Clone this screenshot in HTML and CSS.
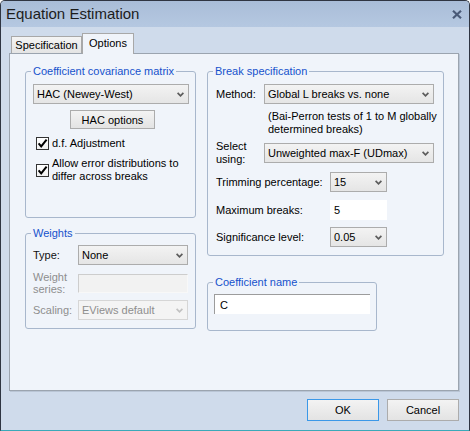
FILE: index.html
```html
<!DOCTYPE html>
<html>
<head>
<meta charset="utf-8">
<title>Equation Estimation</title>
<link rel="stylesheet" href="styles.css">
</head>
<body>
<div class="window">
  <div class="titlebar">
    <span class="title">Equation Estimation</span>
    <svg class="close" width="10" height="9" viewBox="0 0 10 9"><path d="M1 0.8 L9 8.2 M9 0.8 L1 8.2" stroke="#4a5a78" stroke-width="2.2" fill="none"/></svg>
  </div>
  <div class="tabs">
    <div class="tab spec">Specification</div>
    <div class="tab active">Options</div>
  </div>
  <div class="panel">
    <div class="col col-left">
      <div class="group g-cov">
        <span class="legend">Coefficient covariance matrix</span>
        <div class="combo w156"><span>HAC (Newey-West)</span><svg class="chev" width="7" height="5" viewBox="0 0 7 5"><polyline points="0.6,0.8 3.5,3.8 6.4,0.8" fill="none" stroke="#5c5c5c" stroke-width="1.7"/></svg></div>
        <div class="btn hac">HAC options</div>
        <div class="check c1">
          <span class="box"><svg width="11" height="11" viewBox="0 0 11 11"><polyline points="1.6,5.3 4.2,8.4 9.6,1.6" fill="none" stroke="#000" stroke-width="2"/></svg></span>
          <span class="ctext">d.f. Adjustment</span>
        </div>
        <div class="check c2">
          <span class="box"><svg width="11" height="11" viewBox="0 0 11 11"><polyline points="1.6,5.3 4.2,8.4 9.6,1.6" fill="none" stroke="#000" stroke-width="2"/></svg></span>
          <span class="ctext two">Allow error distributions to<br>differ across breaks</span>
        </div>
      </div>
      <div class="group g-w">
        <span class="legend">Weights</span>
        <div class="frow">
          <span class="flabel">Type:</span>
          <div class="combo w110"><span>None</span><svg class="chev" width="7" height="5" viewBox="0 0 7 5"><polyline points="0.6,0.8 3.5,3.8 6.4,0.8" fill="none" stroke="#5c5c5c" stroke-width="1.7"/></svg></div>
        </div>
        <div class="frow r-series">
          <span class="flabel dis two12">Weight<br>series:</span>
          <div class="field dis-field w110"></div>
        </div>
        <div class="frow r-scale">
          <span class="flabel dis">Scaling:</span>
          <div class="combo disabled w110"><span>EViews default</span><svg class="chev" width="7" height="5" viewBox="0 0 7 5"><polyline points="0.6,0.8 3.5,3.8 6.4,0.8" fill="none" stroke="#c2c2c2" stroke-width="1.7"/></svg></div>
        </div>
      </div>
    </div>
    <div class="col col-right">
      <div class="group g-brk">
        <span class="legend">Break specification</span>
        <div class="frow">
          <span class="blabel">Method:</span>
          <div class="combo w170"><span>Global L breaks vs. none</span><svg class="chev" width="7" height="5" viewBox="0 0 7 5"><polyline points="0.6,0.8 3.5,3.8 6.4,0.8" fill="none" stroke="#5c5c5c" stroke-width="1.7"/></svg></div>
        </div>
        <div class="note">(Bai-Perron tests of 1 to M globally<br>determined breaks)</div>
        <div class="frow r-select">
          <span class="blabel two">Select<br>using:</span>
          <div class="combo w170"><span>Unweighted max-F (UDmax)</span><svg class="chev" width="7" height="5" viewBox="0 0 7 5"><polyline points="0.6,0.8 3.5,3.8 6.4,0.8" fill="none" stroke="#5c5c5c" stroke-width="1.7"/></svg></div>
        </div>
        <div class="frow r-trim">
          <span class="wlabel">Trimming percentage:</span>
          <div class="combo w57"><span>15</span><svg class="chev" width="7" height="5" viewBox="0 0 7 5"><polyline points="0.6,0.8 3.5,3.8 6.4,0.8" fill="none" stroke="#5c5c5c" stroke-width="1.7"/></svg></div>
        </div>
        <div class="frow r-max">
          <span class="wlabel">Maximum breaks:</span>
          <div class="field plain w57">5</div>
        </div>
        <div class="frow r-sig">
          <span class="wlabel">Significance level:</span>
          <div class="combo w57"><span>0.05</span><svg class="chev" width="7" height="5" viewBox="0 0 7 5"><polyline points="0.6,0.8 3.5,3.8 6.4,0.8" fill="none" stroke="#5c5c5c" stroke-width="1.7"/></svg></div>
        </div>
      </div>
      <div class="group g-coef">
        <span class="legend">Coefficient name</span>
        <div class="field sunken w156">C</div>
      </div>
    </div>
  </div>
  <div class="footer">
    <div class="btn dlg ok">OK</div>
    <div class="btn dlg">Cancel</div>
  </div>
</div>
</body>
</html>
```
FILE: styles.css
```css
* { box-sizing: border-box; }
html, body { margin: 0; padding: 0; }
body {
  width: 470px;
  height: 431px;
  overflow: hidden;
  font-family: "Liberation Sans", Arial, sans-serif;
  font-size: 11px;
  color: #000;
  background: #ffffff;
}
.window {
  width: 470px;
  height: 431px;
  border: 1px solid #2f3542;
  border-bottom-color: #3aa9b9;
  border-radius: 5px 5px 0 0;
  background: #cfdbeb;
  display: flex;
  flex-direction: column;
  overflow: hidden;
}
.titlebar {
  flex: none;
  height: 26px;
  display: flex;
  align-items: center;
  justify-content: space-between;
  padding: 0 7px 0 5px;
  background: linear-gradient(#a9bdd8, #b5c8e1);
}
.title {
  font-size: 15px;
  line-height: 26px;
  color: #1c1c1c;
}
.close { display: block; }
.tabs {
  flex: none;
  height: 26px;
  display: flex;
  align-items: flex-end;
  padding-left: 10px;
}
.tab {
  height: 17px;
  border: 1px solid #a8a8a8;
  border-bottom: none;
  background: linear-gradient(#f4f4f4, #e4e4e4);
  text-align: center;
  line-height: 16px;
}
.tab.spec { width: 71px; }
.tab.active {
  width: 52px;
  height: 21px;
  line-height: 19px;
  margin-bottom: -1px;
  background: #f0f4fa;
  position: relative;
  z-index: 1;
}
.panel {
  flex: none;
  width: 450px;
  height: 338px;
  margin-left: 8px;
  border: 1px solid #9ba4af;
  background: #f0f4fa;
  box-shadow: 1px 1px 0 #b9c5d5;
  display: grid;
  grid-template-columns: 171px 237px;
  column-gap: 11px;
  align-items: start;
  padding: 17px 0 0 15px;
}
.col { display: flex; flex-direction: column; align-items: flex-start; }
.col-left { gap: 15px; }
.col-right { gap: 26px; }
.group {
  position: relative;
  border: 1px solid #a8b7cc;
  border-radius: 3px;
  display: flex;
  flex-direction: column;
  align-items: flex-start;
}
.legend {
  position: absolute;
  top: -8px;
  left: 5px;
  padding: 0 2px;
  line-height: 14px;
  color: #1652cc;
  background: #f0f4fa;
  white-space: nowrap;
}
.g-cov { width: 171px; height: 147px; padding: 12px 6px 0 7px; }
.g-w { width: 171px; height: 96px; padding: 11px 6px 0 7px; }
.g-brk { width: 237px; height: 185px; padding: 12px 9px 0 8px; }
.g-coef { width: 170px; height: 49px; padding: 11px 6px 0 6px; }

.combo {
  flex: none;
  height: 20px;
  border: 1px solid #acacac;
  background: linear-gradient(#f3f3f3, #e5e5e5);
  display: flex;
  align-items: center;
  justify-content: space-between;
  padding: 0 4px 0 3px;
  white-space: nowrap;
}
.combo.disabled {
  border-color: #d6d6d6;
  background: #f4f4f4;
  color: #8e8e8e;
}
.chev { display: block; flex: none; }
.w156 { width: 156px; }
.w170 { width: 170px; }
.w110 { width: 110px; }
.w57 { width: 57px; }

.btn {
  flex: none;
  border: 1px solid #acacac;
  background: linear-gradient(#f3f3f3, #e3e3e3);
  display: flex;
  align-items: center;
  justify-content: center;
}
.btn.hac {
  width: 85px;
  height: 19px;
  margin: 6px 0 0 37px;
}
.check {
  display: flex;
  align-items: center;
  margin-left: 3px;
}
.check.c1 { margin-top: 8px; height: 13px; }
.check.c2 { margin-top: 7px; }
.box {
  flex: none;
  width: 13px;
  height: 13px;
  border: 1px solid #333;
  background: linear-gradient(#ffffff, #f0f0f0);
  margin-right: 3px;
  display: flex;
}
.box svg { display: block; }
.ctext { line-height: 13px; white-space: nowrap; }

.frow {
  display: flex;
  align-items: center;
}
.flabel { width: 45px; flex: none; color: #111; }
.flabel.dis { color: #8e8e8e; }
.two12 { line-height: 12px; }
.r-series { margin-top: 6px; }
.r-scale { margin-top: 5px; }

.field {
  flex: none;
  height: 20px;
  display: flex;
  align-items: center;
}
.dis-field {
  height: 19px;
  border: 1px solid;
  border-color: #cdcdcd #f8f8f8 #f8f8f8 #cdcdcd;
  background: #f2f2f2;
}
.plain {
  background: #fff;
  padding-left: 4px;
}
.sunken {
  background: #fff;
  border-top: 1px solid #9c9c9c;
  border-left: 1px solid #9c9c9c;
  padding-left: 5px;
}

.blabel { width: 48px; flex: none; }
.blabel.two { line-height: 13px; }
.wlabel { width: 114px; flex: none; }
.note {
  margin: 6px 0 0 52px;
  line-height: 13px;
  white-space: nowrap;
}
.r-select { margin-top: 4px; }
.r-trim { margin-top: 6px; }
.r-max { margin-top: 8px; }
.r-sig { margin-top: 7px; }

.footer {
  flex: none;
  display: flex;
  justify-content: flex-end;
  gap: 8px;
  padding: 8px 10px 0 0;
}
.btn.dlg {
  width: 72px;
  height: 22px;
}
.btn.ok {
  border-color: #3b98e8;
}
```
